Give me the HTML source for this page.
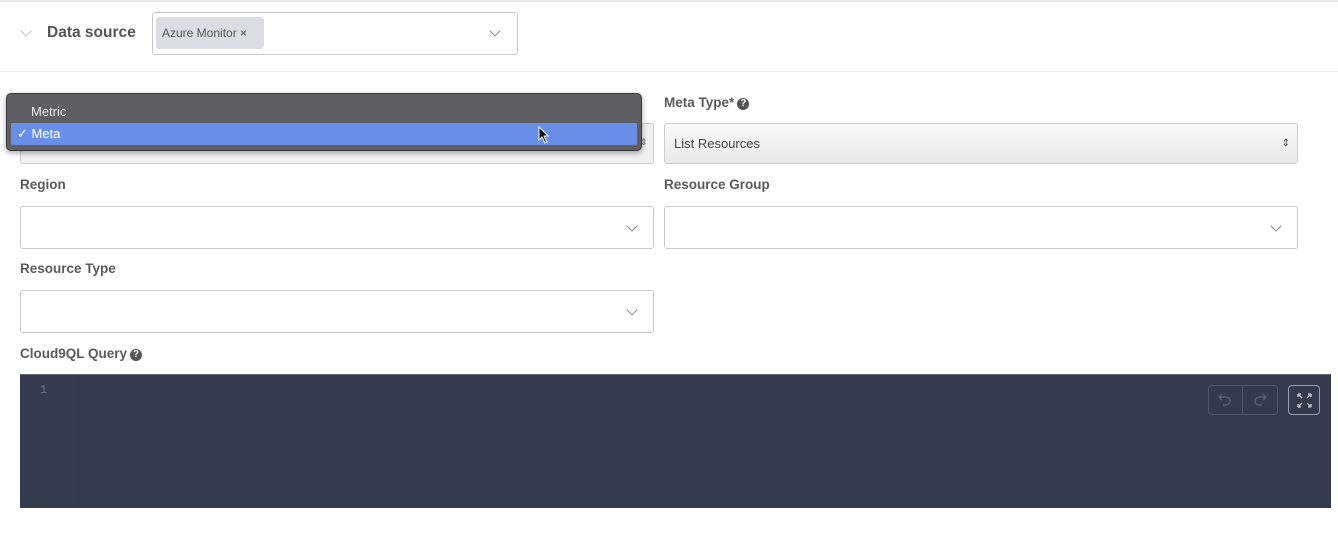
<!DOCTYPE html>
<html><head><meta charset="utf-8"><style>
*{box-sizing:border-box;margin:0;padding:0}
body{width:1338px;height:536px;background:#fff;font-family:"Liberation Sans",sans-serif;color:#4a4a4a;position:relative;overflow:hidden}
.abs{position:absolute}
.lbl{font-size:13.5px;font-weight:bold;color:#5a5a5a}
.sel{border:1px solid #c8c8c8;border-radius:3px;background:#fff}
.chev{position:absolute;width:8px;height:8px;border-right:1.3px solid #888;border-bottom:1.3px solid #888;transform:rotate(45deg)}
.q{display:inline-block;width:12px;height:12px;border-radius:50%;background:#555;color:#fff;font-size:10px;line-height:12px;text-align:center;vertical-align:1px;margin-left:3px}
</style></head><body>
<div class="abs" style="left:0;top:0;width:1338px;height:2px;background:#e8e8e8"></div>
<div class="abs" style="left:0;top:71px;width:1338px;height:1px;background:#ececec"></div>
<div class="chev" style="left:22px;top:27px;border-color:#bbb"></div>
<div class="abs" style="left:47px;top:24px;font-size:15.5px;font-weight:bold;color:#555">Data source</div>
<div class="abs sel" style="left:152px;top:12px;width:366px;height:43px">
  <div class="abs" style="left:3px;top:4px;width:108px;height:32px;background:#dcdde2;border-radius:3px;font-size:12px;color:#555;line-height:32px;padding-left:6px">Azure Monitor ×</div>
  <div class="chev" style="left:338px;top:14px"></div>
</div>

<div class="abs lbl" style="left:664px;top:95px">Meta Type*<span class="q">?</span></div>
<div class="abs" style="left:20px;top:123px;width:634px;height:41px;border:1px solid #ccc;border-radius:3px;background:#f0f0f0"></div>
<div class="abs" style="left:640px;top:137px;font-size:9px;color:#666">⇕</div>
<div class="abs" style="left:664px;top:123px;width:634px;height:41px;border:1px solid #ccc;border-radius:3px;background:linear-gradient(#fafafa,#e9e9e9);font-size:13px;color:#444;line-height:40px;padding-left:9px">List Resources<span style="position:absolute;right:7px;font-size:10px">⇕</span></div>

<div class="abs" style="left:6px;top:93px;width:636px;height:58px;background:#5f5e62;border-radius:5px;border:1px solid #3a3a3c;box-shadow:0 2px 6px rgba(0,0,0,.35)">
  <div class="abs" style="left:24px;top:10px;font-size:13px;color:#eee">Metric</div>
  <div class="abs" style="left:4px;top:29px;width:626px;height:22px;background:#6a8fe8;border-radius:2px;font-size:13px;color:#fff;line-height:22px;padding-left:6px">✓ Meta</div>
  <svg class="abs" style="left:531px;top:32px" width="12" height="18" viewBox="0 0 12 18"><path d="M1 1 L1 14 L4 11 L7 17 L9 16 L6 10 L10 10 Z" fill="#000" stroke="#fff" stroke-width="1"/></svg>
</div>

<div class="abs lbl" style="left:20px;top:177px">Region</div>
<div class="abs sel" style="left:20px;top:206px;width:634px;height:43px"><div class="chev" style="left:607px;top:15px"></div></div>
<div class="abs lbl" style="left:664px;top:177px">Resource Group</div>
<div class="abs sel" style="left:664px;top:206px;width:634px;height:43px"><div class="chev" style="left:607px;top:15px"></div></div>
<div class="abs lbl" style="left:20px;top:261px">Resource Type</div>
<div class="abs sel" style="left:20px;top:290px;width:634px;height:43px"><div class="chev" style="left:607px;top:15px"></div></div>

<div class="abs lbl" style="left:20px;top:346px">Cloud9QL Query<span class="q">?</span></div>
<div class="abs" style="left:20px;top:374px;width:1311px;height:134px;background:#333a4b;border-top:1px solid #666">
  <div class="abs" style="left:0;top:0;width:58px;height:133px;background:#343b4c"></div>
  <div class="abs" style="left:20px;top:8px;font-size:12px;color:#6b7284;font-family:'Liberation Mono',monospace">1</div>
  <div class="abs" style="left:1188px;top:10px;width:70px;height:30px;border:1px solid #4e5568;border-radius:4px"></div>
  <div class="abs" style="left:1222px;top:10px;width:1px;height:30px;background:#4e5568"></div>
  <svg class="abs" style="left:1197px;top:17px" width="16" height="16" viewBox="0 0 16 16" fill="none" stroke="#5c6376" stroke-width="1.3"><path d="M5 2L2 5l3 3M2 5h7a4 4 0 0 1 0 8H6"/></svg>
  <svg class="abs" style="left:1232px;top:17px" width="16" height="16" viewBox="0 0 16 16" fill="none" stroke="#5c6376" stroke-width="1.3"><path d="M11 2l3 3-3 3M14 5H7a4 4 0 0 0 0 8h3"/></svg>
  <div class="abs" style="left:1268px;top:10px;width:32px;height:30px;border:1px solid #9aa0ad;border-radius:4px">
    <svg class="abs" style="left:7px;top:6px" width="17" height="17" viewBox="0 0 17 17" stroke="#c8ccd5" stroke-width="1.3" fill="none"><path d="M2 2l4 4M2 2v3M2 2h3M15 2l-4 4M15 2v3M15 2h-3M2 15l4-4M2 15v-3M2 15h3M15 15l-4-4M15 15v-3M15 15h-3"/></svg>
  </div>
</div>
</body></html>
